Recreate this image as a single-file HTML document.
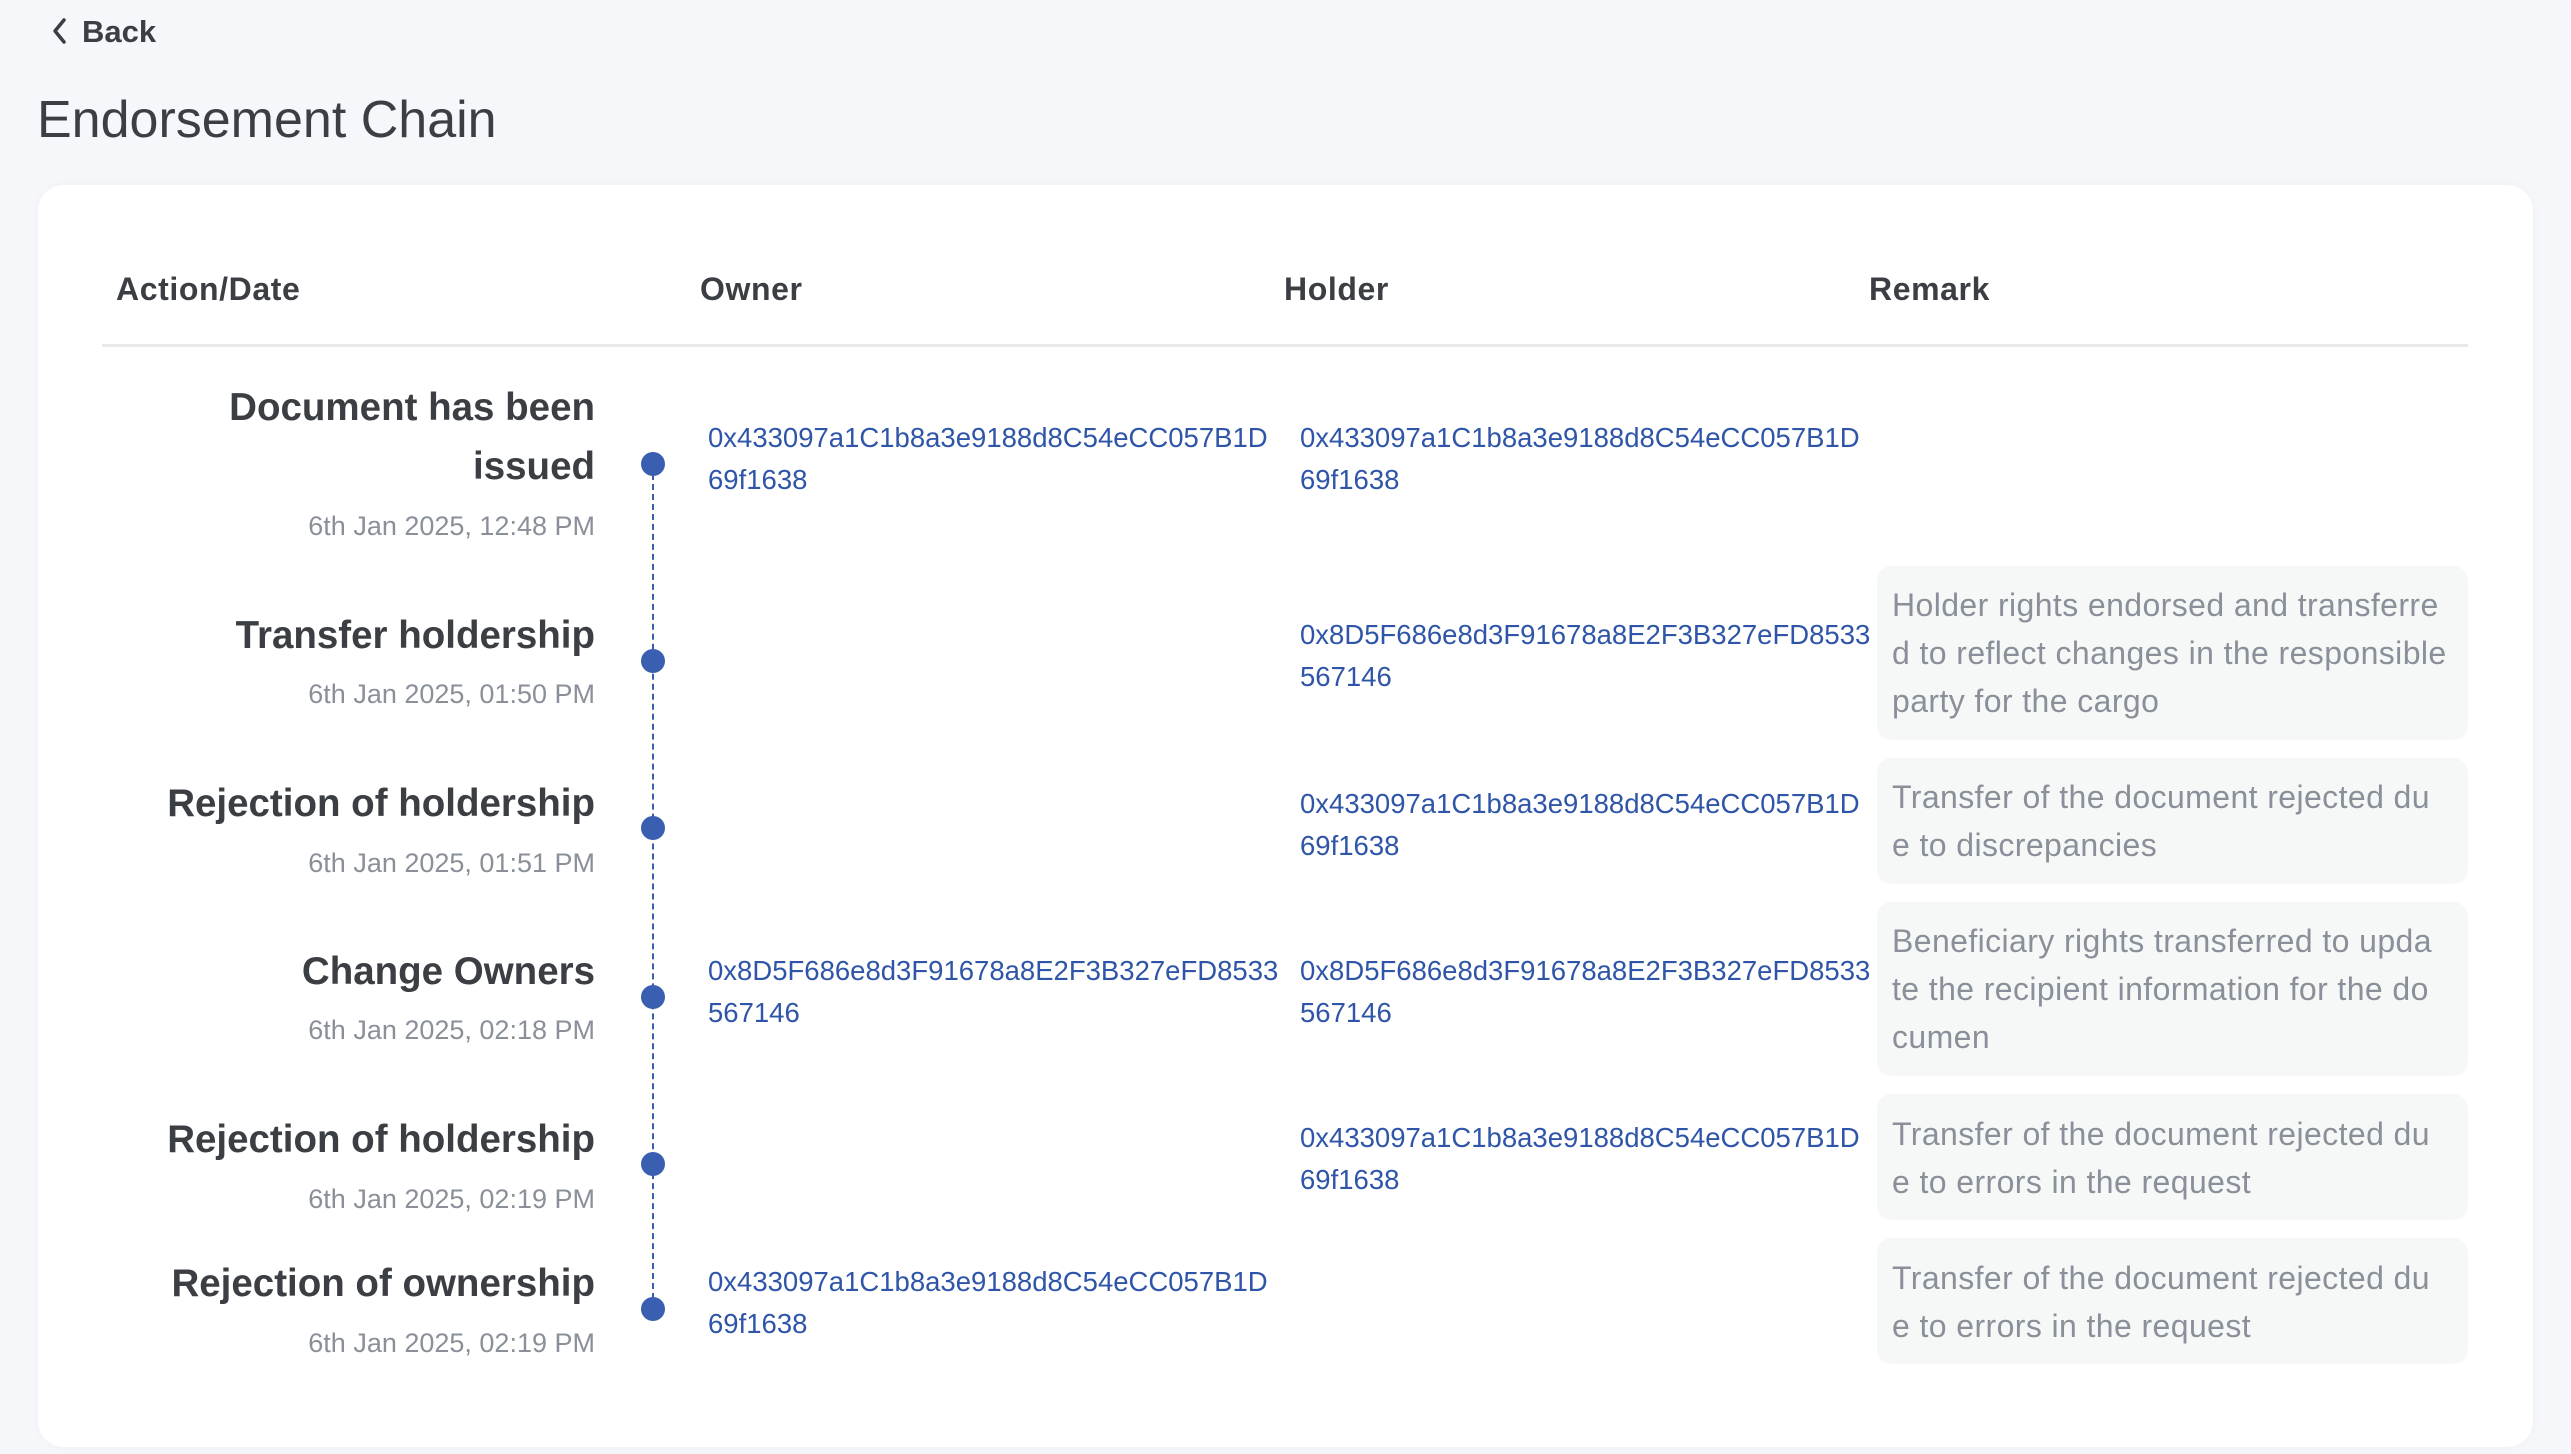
<!DOCTYPE html>
<html><head><meta charset="utf-8"><style>
*{margin:0;padding:0;box-sizing:border-box}
body{width:2571px;height:1454px;background:#f6f7fb;font-family:"Liberation Sans",sans-serif;position:relative;overflow:hidden;color:#3b3f44}
.a{position:absolute;white-space:nowrap}
.card{position:absolute;left:38px;top:185px;width:2495px;height:1262px;background:#fff;border-radius:26px;box-shadow:0 0 12px rgba(0,0,0,0.03)}
.h{font-size:32px;font-weight:bold;color:#3b3f44;height:40px;line-height:40px;top:269px;letter-spacing:0.6px}
.t{font-size:38.5px;font-weight:bold;color:#3b3f44;right:1976px;text-align:right;height:50px;line-height:50px}
.d{font-size:27px;color:#8a9099;right:1976px;text-align:right;height:36px;line-height:36px}
.ad{font-size:27.5px;color:#2f55a8;line-height:42px}
.dot{position:absolute;left:641px;width:24px;height:24px;border-radius:50%;background:#3a5fb0}
.box{position:absolute;left:1877px;width:591px;background:#f6f8f8;border-radius:14px}
.r{font-size:32px;color:#8a9099;line-height:48px;left:1892px;letter-spacing:0.4px}
</style></head><body>
<div class="a" style="left:50px;top:14px;font-size:31px;font-weight:bold;color:#3b3f44;line-height:36px"><svg width="20" height="28" viewBox="0 0 20 28" style="vertical-align:-3px;margin-right:12px"><path d="M14 3 L5 14 L14 25" fill="none" stroke="#3b3f44" stroke-width="3.5" stroke-linecap="round" stroke-linejoin="round"/></svg>Back</div>
<div class="a" style="left:37px;top:88px;font-size:52px;color:#3b3f44;line-height:64px">Endorsement Chain</div>
<div class="card"></div>
<div class="a h" style="left:116px">Action/Date</div>
<div class="a h" style="left:700px">Owner</div>
<div class="a h" style="left:1284px">Holder</div>
<div class="a h" style="left:1869px">Remark</div>
<div class="a" style="left:102px;top:344px;width:2366px;height:3px;background:#e8e9eb"></div>
<div class="a" style="left:652px;top:464px;height:845px;border-left:2px dashed #3a5fb0"></div>

<div class="a t" style="top:383px">Document has been</div>
<div class="a t" style="top:442px">issued</div>
<div class="a d" style="top:508px">6th Jan 2025, 12:48 PM</div>
<div class="dot" style="top:452px"></div>
<div class="a ad" style="left:708px;top:417px">0x433097a1C1b8a3e9188d8C54eCC057B1D<br>69f1638</div>
<div class="a ad" style="left:1300px;top:417px">0x433097a1C1b8a3e9188d8C54eCC057B1D<br>69f1638</div>

<div class="a t" style="top:611px">Transfer holdership</div>
<div class="a d" style="top:676px">6th Jan 2025, 01:50 PM</div>
<div class="dot" style="top:649px"></div>
<div class="a ad" style="left:1300px;top:614px">0x8D5F686e8d3F91678a8E2F3B327eFD8533<br>567146</div>
<div class="box" style="top:566px;height:174px"></div>
<div class="a r" style="top:581px">Holder rights endorsed and transferre<br>d to reflect changes in the responsible<br>party for the cargo</div>

<div class="a t" style="top:779px">Rejection of holdership</div>
<div class="a d" style="top:845px">6th Jan 2025, 01:51 PM</div>
<div class="dot" style="top:816px"></div>
<div class="a ad" style="left:1300px;top:783px">0x433097a1C1b8a3e9188d8C54eCC057B1D<br>69f1638</div>
<div class="box" style="top:758px;height:126px"></div>
<div class="a r" style="top:773px">Transfer of the document rejected du<br>e to discrepancies</div>

<div class="a t" style="top:947px">Change Owners</div>
<div class="a d" style="top:1012px">6th Jan 2025, 02:18 PM</div>
<div class="dot" style="top:985px"></div>
<div class="a ad" style="left:708px;top:950px">0x8D5F686e8d3F91678a8E2F3B327eFD8533<br>567146</div>
<div class="a ad" style="left:1300px;top:950px">0x8D5F686e8d3F91678a8E2F3B327eFD8533<br>567146</div>
<div class="box" style="top:902px;height:174px"></div>
<div class="a r" style="top:917px">Beneficiary rights transferred to upda<br>te the recipient information for the do<br>cumen</div>

<div class="a t" style="top:1115px">Rejection of holdership</div>
<div class="a d" style="top:1181px">6th Jan 2025, 02:19 PM</div>
<div class="dot" style="top:1152px"></div>
<div class="a ad" style="left:1300px;top:1117px">0x433097a1C1b8a3e9188d8C54eCC057B1D<br>69f1638</div>
<div class="box" style="top:1094px;height:126px"></div>
<div class="a r" style="top:1110px">Transfer of the document rejected du<br>e to errors in the request</div>

<div class="a t" style="top:1259px">Rejection of ownership</div>
<div class="a d" style="top:1325px">6th Jan 2025, 02:19 PM</div>
<div class="dot" style="top:1297px"></div>
<div class="a ad" style="left:708px;top:1261px">0x433097a1C1b8a3e9188d8C54eCC057B1D<br>69f1638</div>
<div class="box" style="top:1238px;height:126px"></div>
<div class="a r" style="top:1254px">Transfer of the document rejected du<br>e to errors in the request</div>
</body></html>
